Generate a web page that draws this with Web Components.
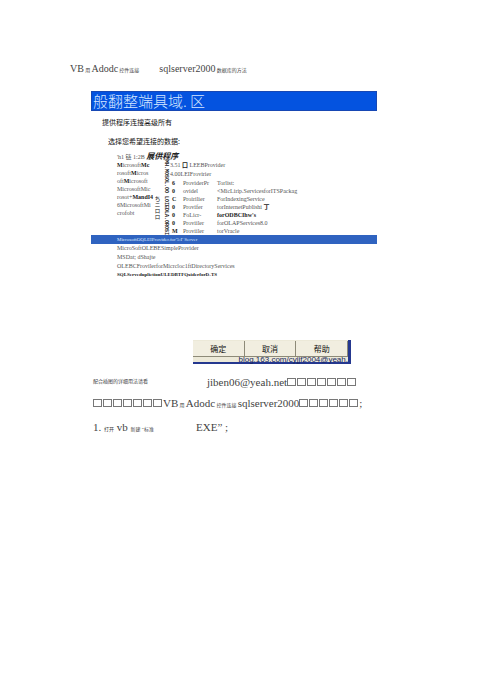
<!DOCTYPE html>
<html lang="zh-CN">
<head>
<meta charset="utf-8">
<title>VB Adodc</title>
<style>
  body {
    margin: 0;
    background: #fff;
    color: #444;
    font: 11px/16px "Liberation Serif", "Noto Sans CJK SC", serif;
  }
</style>
</head>
<body>
<doc-page>
  <doc-line slot="title">VB<small> 用 </small>Adodc<small> 控件连接</small><doc-gap></doc-gap>sqlserver2000<small> 数据库的方法</small></doc-line>
  <link-dialog></link-dialog>
  <doc-notes></doc-notes>
</doc-page>

<script>
class DocPage extends HTMLElement {
    constructor() {
        super();
        this.attachShadow({ mode: 'open' });
        this.shadowRoot.innerHTML = `
            <style>
              :host {
                display: block;
                padding: 61px 113px 40px 91px;
              }
              header {
                margin-left: -21px;
                margin-bottom: 12px;
                font-size: 10px;
              }
            </style>
            <header><slot name="title"></slot></header>
            <slot></slot>
        `;
    }
}

class DocLine extends HTMLElement {
    constructor() {
        super();
        this.attachShadow({ mode: 'open' });
        this.shadowRoot.innerHTML = `
            <style>
              :host {
                display: block;
                white-space: nowrap;
              }
              ::slotted(small) {
                font-size: 5px;
              }
            </style>
            <slot></slot>
        `;
    }
}

class DocGap extends HTMLElement {
    constructor() {
        super();
        this.attachShadow({ mode: 'open' });
        this.shadowRoot.innerHTML = `
            <style>
              :host {
                display: inline-block;
                width: 20px;
              }
              :host([wide]) {
                width: 42px;
              }
            </style>
        `;
    }
}

class ProviderList extends HTMLElement {
    constructor() {
        super();
        this.attachShadow({ mode: 'open' });
        this.shadowRoot.innerHTML = `
            <style>
              :host {
                display: block;
                color: #555;
                font-size: 6px;
                line-height: 8px;
                white-space: nowrap;
              }
              .top {
                display: grid;
                grid-template-columns: 36px 8px 9px 1fr;
                padding-left: 26px;
                height: 82px;
              }
              .names {
                display: grid;
                grid-auto-rows: 8px;
                align-content: start;
              }
              .names b {
                color: #222;
              }
              .lead em {
                color: #222;
                font-size: 8px;
                font-weight: bold;
              }
              .side {
                writing-mode: vertical-rl;
                color: #222;
                font: bold 5px/8px "Liberation Mono", monospace;
                padding-top: 7px;
              }
              .side.low {
                padding-top: 43px;
                font: 6px/8px "Noto Sans CJK SC", sans-serif;
              }
              .right {
                padding-top: 8px;
              }
              .wide {
                line-height: 9px;
              }
              .wide b {
                color: #222;
              }
              .pairs {
                display: grid;
                grid-template-columns: 9px 32px 1fr;
                column-gap: 2px;
                grid-auto-rows: 8px;
                margin-left: 2px;
              }
              .pairs b {
                color: #222;
              }
              .picked {
                background: #2f63c0;
                color: #dce8ff;
                font-size: 5px;
                line-height: 9px;
                padding-left: 26px;
              }
              .rest {
                display: grid;
                grid-auto-rows: 9px;
                align-content: start;
                padding-left: 26px;
              }
              .rest b {
                color: #222;
                font-size: 5px;
              }
            </style>
            <div class="top">
              <div class="names">
                <span class="lead">'h1 链 1:2B <em>展供程序</em></span>
                <span><b>M</b>icrosoft<b>Mc</b></span>
                <span>rosoft<b>M</b>icros</span>
                <span>oft<b>M</b>icrosoft</span>
                <span>MicrosoftMic</span>
                <span>rosot+<b>MandI4</b></span>
                <span>6MicrosoftMi</span>
                <span>crofobt</span>
              </div>
              <div class="side low">ちニロロ</div>
              <div class="side">MH.MOSOL.OO LOIEDLA.OROSI</div>
              <div class="right">
                <div class="wide">3.51 <b>口</b> LEEBProvider</div>
                <div class="wide">4.00LEIFrovirier</div>
                <div class="pairs">
                  <b>6</b><span>ProviderPr</span><span>Torlist:</span>
                  <b>0</b><span>ovidel</span><span>&lt;MicLirip.ServicesforITSPackag</span>
                  <b>C</b><span>Proirilier</span><span>ForIndexingService</span>
                  <b>0</b><span>Provifer</span><span>torInternetPublishi <b>丁</b></span>
                  <b>0</b><span>FoLicr-</span><span><b>forODBCIhw's</b></span>
                  <b>0</b><span>Proviiler</span><span>forOLAPServices8.0</span>
                  <b>M</b><span>Proviiler</span><span>torVracle</span>
                </div>
              </div>
            </div>
            <div class="picked">MicrosoftOQLEIProvider.for'5:I' Server</div>
            <div class="rest">
              <span>MicroSoftOLEBESimpleProvider</span>
              <span>MSDat; dShajte</span>
              <span>OLEBCFrovilerforMicrcloc1ftDirectoryServices</span>
              <b>SQLServeduplictionULEDBTFQxiderforD-TS</b>
            </div>
        `;
    }
}

class DialogButtons extends HTMLElement {
    constructor() {
        super();
        this.attachShadow({ mode: 'open' });
        this.shadowRoot.innerHTML = `
            <style>
              :host {
                display: block;
                width: 158px;
                box-sizing: border-box;
                border-right: 3px solid #25388f;
                border-bottom: 2px solid #25388f;
                background: #ece9d8;
                position: relative;
              }
              div {
                display: grid;
                grid-template-columns: repeat(3, 1fr);
                height: 22px;
                padding-top: 1px;
                box-sizing: border-box;
              }
              button {
                height: 16px;
                padding: 0;
                border: 0 solid #8d8a78;
                border-right-width: 1px;
                border-bottom-width: 1px;
                background: #f1eee0;
                color: #111;
                font: 8px/15px "Noto Sans CJK SC", sans-serif;
              }
              span {
                position: absolute;
                right: 0;
                bottom: -2px;
                color: #16265e;
                font: 8px/8px "Liberation Sans", sans-serif;
              }
            </style>
            <div>
              <button type="button">确定</button>
              <button type="button">取消</button>
              <button type="button">帮助</button>
            </div>
            <span>blog.163.com/cyjjf2004@yeah.</span>
        `;
    }
}

class LinkDialog extends HTMLElement {
    constructor() {
        super();
        this.attachShadow({ mode: 'open' });
        this.shadowRoot.innerHTML = `
            <style>
              :host {
                display: block;
              }
              h1 {
                margin: 0;
                padding-left: 1px;
                border: 1px solid #1748b4;
                background: #0453e0;
                color: #d5e7ff;
                font: 300 15px/18px "Noto Sans CJK SC", sans-serif;
              }
              p {
                margin: 0;
                padding-left: 11px;
                color: #111;
                font: 7px/10px "Noto Sans CJK SC", sans-serif;
              }
              .tabs {
                margin-top: 6px;
              }
              .hint {
                margin: 9px 0 7px;
                padding-left: 17px;
              }
              dialog-buttons {
                margin: 60px 0 0 102px;
              }
            </style>
            <h1>般翻整端具域. 区</h1>
            <p class="tabs">提供程序连搜高级所有</p>
            <p class="hint">选择您希望连接的数据:</p>
            <provider-list></provider-list>
            <dialog-buttons></dialog-buttons>
        `;
    }
}

class DocNotes extends HTMLElement {
    constructor() {
        super();
        this.attachShadow({ mode: 'open' });
        this.shadowRoot.innerHTML = `
            <style>
              :host {
                display: grid;
                row-gap: 5px;
                margin-top: 10px;
                padding-left: 2px;
              }
              .mail {
                display: grid;
                grid-template-columns: 114px 1fr;
                align-items: center;
              }
              i {
                display: inline-block;
                width: 9px;
                height: 8px;
                margin-right: 1px;
                box-sizing: border-box;
                border: 1px solid #777;
              }
            </style>
            <doc-line class="mail"><small>配合插图的详细用法请看</small><span>jiben06@yeah.net${'<i></i>'.repeat(7)}</span></doc-line>
            <doc-line>${'<i></i>'.repeat(7)}VB<small> 用 </small>Adodc<small> 控件连接 </small>sqlserver2000${'<i></i>'.repeat(6)};</doc-line>
            <doc-line>1. <small>打开</small> vb <small>新建 “标准</small><doc-gap wide></doc-gap>EXE” ;</doc-line>
        `;
    }
}

customElements.define('doc-page', DocPage);
customElements.define('doc-line', DocLine);
customElements.define('doc-gap', DocGap);
customElements.define('provider-list', ProviderList);
customElements.define('dialog-buttons', DialogButtons);
customElements.define('link-dialog', LinkDialog);
customElements.define('doc-notes', DocNotes);
</script>
</body>
</html>
